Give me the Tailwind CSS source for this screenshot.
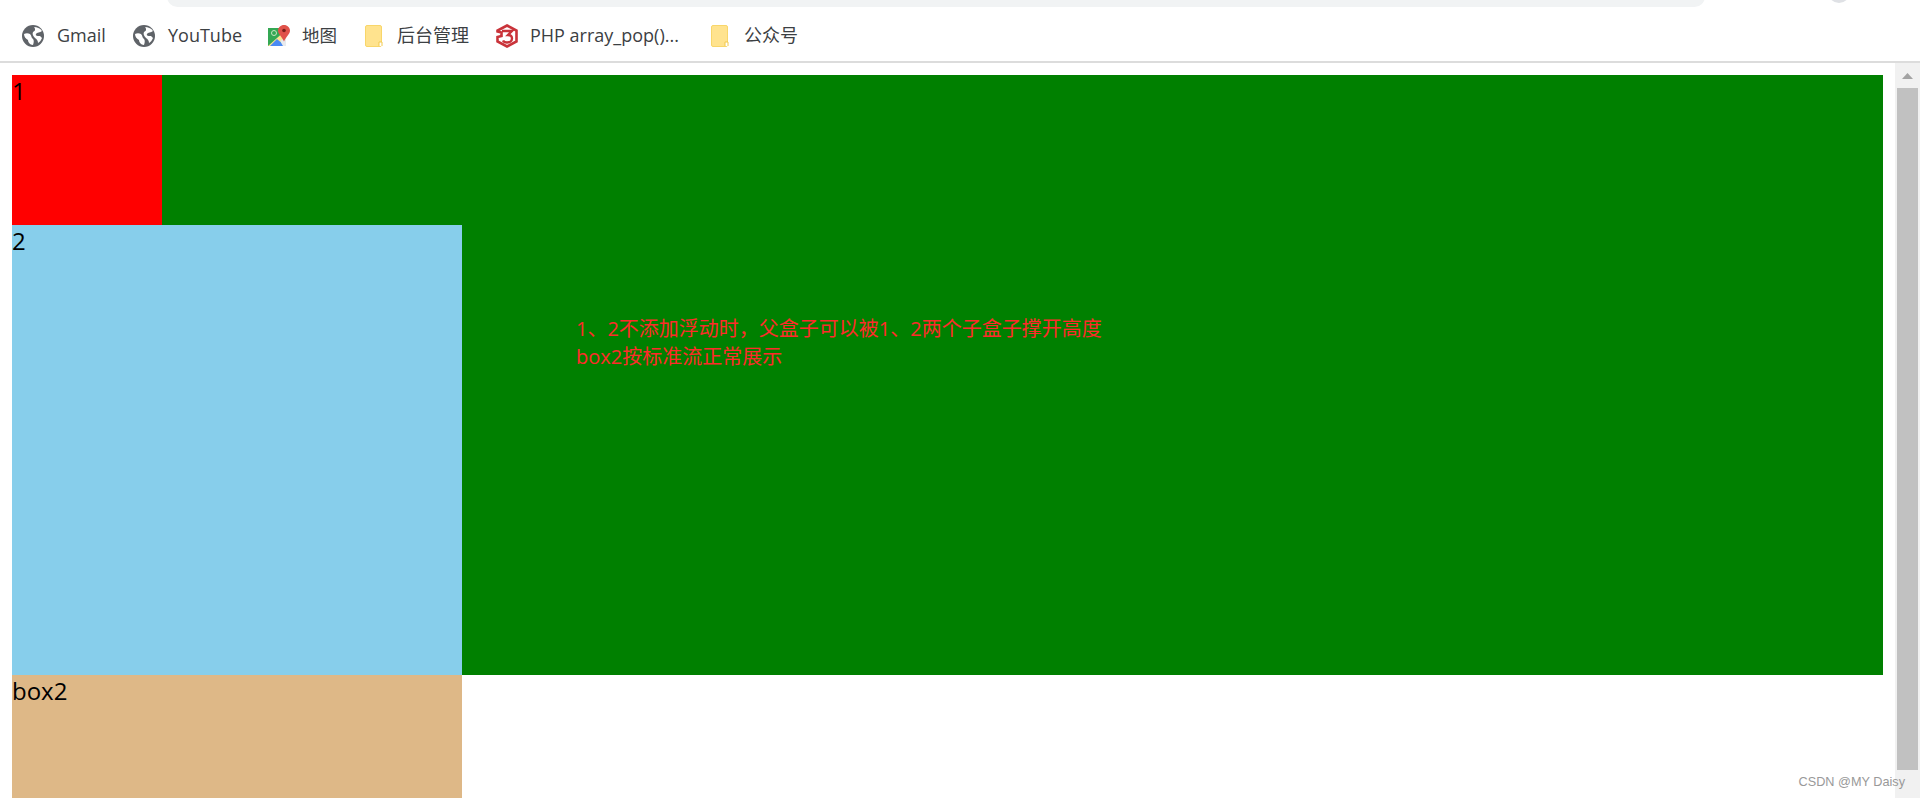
<!DOCTYPE html>
<html lang="zh-CN">
<head>
    <meta charset="UTF-8">
    <title>浮动</title>
    <script src="https://cdn.jsdelivr.net/npm/@tailwindcss/browser@4"></script>
</head>
<body class="h-[798px] overflow-hidden bg-white font-['Open_Sans','Noto_Sans_CJK_SC',sans-serif]">
    <!-- browser chrome -->
    <div class="relative h-[7px] overflow-hidden bg-white">
        <div class="ml-[167px] mt-[-14px] h-[21px] w-[1538px] rounded-[14px] bg-[#f1f3f4]"></div>
        <div class="absolute left-[1828px] top-[-19px] h-[22px] w-[22px] rounded-full bg-[#dfe1e5]"></div>
    </div>
    <div class="flex h-[56px] items-center border-b-2 border-[#dcdcdc] pt-[3px] pl-[22px] text-[18px] text-[#3c4043]">
        <div class="flex w-[111px] items-center gap-[13px]">
            <svg class="h-[22px] w-[22px] shrink-0" viewBox="0 0 22 22"><circle cx="11" cy="11" r="11" fill="#5f6368"/><path d="M2 9c2-1 4-1 6 0 2 2 1 4 3 5 1 1 1 3 0 6-3 0-5-3-5-5-2-1-4-3-4-6zM12 2c3 0 6 1 8 4-2 2-5 1-6 3-1 2 2 2 4 2l2 2c-1 2-2 4-4 5 0-2-1-4-3-5-2-2-3-4-2-6 1-1 2-1 2-2 0-1 0-2-1-3z" fill="#fff"/></svg>
            <span>Gmail</span>
        </div>
        <div class="flex w-[135px] items-center gap-[13px]">
            <svg class="h-[22px] w-[22px] shrink-0" viewBox="0 0 22 22"><circle cx="11" cy="11" r="11" fill="#5f6368"/><path d="M2 9c2-1 4-1 6 0 2 2 1 4 3 5 1 1 1 3 0 6-3 0-5-3-5-5-2-1-4-3-4-6zM12 2c3 0 6 1 8 4-2 2-5 1-6 3-1 2 2 2 4 2l2 2c-1 2-2 4-4 5 0-2-1-4-3-5-2-2-3-4-2-6 1-1 2-1 2-2 0-1 0-2-1-3z" fill="#fff"/></svg>
            <span>YouTube</span>
        </div>
        <div class="flex w-[97px] items-center gap-[12px]">
            <svg class="h-[22px] w-[22px] shrink-0" viewBox="0 0 22 22"><path d="M0 3h18v18H0z" fill="#34a853"/><path d="M0 21 18 5v7L7 21z" fill="#fde293"/><path d="M2 21l7-7 8 7z" fill="#4a8af4"/><path d="M12 16l6-4v9h-3z" fill="#e8eaed"/><circle cx="6" cy="8" r="2.500" fill="none" stroke="#c9e6c0" stroke-width="1"/><path d="M16 0c3.300 0 6 2.500 6 5.500 0 3.500-3.500 5.500-6 11-2.500-5.500-6-7.500-6-11C10 2.500 12.700 0 16 0z" fill="#e0524a"/><circle cx="16" cy="5.500" r="1.800" fill="#7a1f1a"/></svg>
            <span class="text-[17.5px]">地图</span>
        </div>
        <div class="flex w-[131px] items-center gap-[14px]">
            <svg class="h-[22px] w-[18px] shrink-0" viewBox="0 0 18 22"><rect x="0.5" y="0.5" width="16" height="21" rx="1.5" fill="#ffe38e" stroke="#f8d66a"/><path d="M14 21v-4h3v4" fill="#fff" stroke="#f2c94c"/></svg>
            <span>后台管理</span>
        </div>
        <div class="flex w-[215px] items-center gap-[12px]">
            <svg class="h-[24px] w-[22px] shrink-0" viewBox="0 0 22 24"><path d="M11 1.500 20.500 6.500v11L11 22.500 1.500 17.500V13l4 -1V8.500L1.500 7.500v-1z" fill="none" stroke="#c9333a" stroke-width="2.600"/><path d="M6 7h10l-4 4c3 0 4 1.500 4 3.500 0 2.500-2.500 4-5 4-2 0-3.500-1-4-2" fill="none" stroke="#c9333a" stroke-width="2.400"/></svg>
            <span>PHP array_pop()...</span>
        </div>
        <div class="flex items-center gap-[15px]">
            <svg class="h-[22px] w-[18px] shrink-0" viewBox="0 0 18 22"><rect x="0.5" y="0.5" width="16" height="21" rx="1.5" fill="#ffe38e" stroke="#f8d66a"/><path d="M14 21v-4h3v4" fill="#fff" stroke="#f2c94c"/></svg>
            <span>公众号</span>
        </div>
    </div>

    <!-- page + scrollbar -->
    <div class="relative flex h-[735px] overflow-hidden">
        <main class="w-[1895px] shrink-0 px-[12px] pt-[12px] text-[24px] leading-[32px] text-black">
            <div class="flex h-[600px] bg-[#008000]">
                <div class="w-[450px] shrink-0">
                    <div class="h-[150px] w-[150px] bg-[#ff0000]">1</div>
                    <div class="h-[450px] w-[450px] bg-[#87ceeb]">2</div>
                </div>
                <p class="ml-[114px] pt-[240px] text-[20px] leading-[28px] text-[#ff2a2a]">1、2不添加浮动时，父盒子可以被1、2两个子盒子撑开高度<br>box2按标准流正常展示</p>
            </div>
            <div class="h-[150px] w-[450px] bg-[#deb887]">box2</div>
        </main>
        <div class="relative flex-1 bg-[#f1f1f1] px-[2px] pt-[25px]">
            <svg class="absolute left-[7px] top-[10px] h-[6px] w-[11px]" viewBox="0 0 11 6"><path d="M5.500 0 11 6H0z" fill="#a3a3a3"/></svg>
            <div class="h-[682px] bg-[#c1c1c1]"></div>
        </div>
        <div class="absolute bottom-[8px] right-[15px] font-['Liberation_Sans',sans-serif] text-[12.7px] leading-[16px] text-[#999]">CSDN @MY Daisy</div>
    </div>
</body>
</html>
